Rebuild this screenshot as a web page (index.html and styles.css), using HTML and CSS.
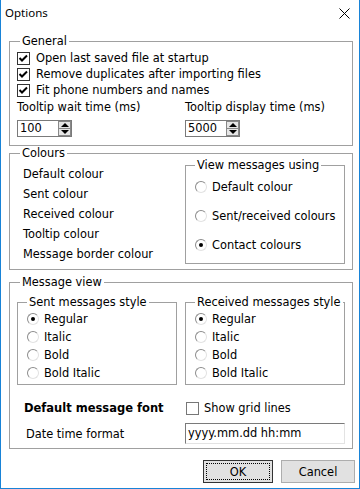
FILE: index.html
```html
<!DOCTYPE html>
<html lang="en">
<head>
    <meta charset="UTF-8">
    <meta name="viewport" content="width=device-width, initial-scale=1.0">
    <title>Options</title>
    <link rel="stylesheet" href="styles.css">
</head>
<body>

    <div class="window">
        <div class="titlebar">
            <span class="title">Options</span>
            <svg class="close" width="11" height="11" viewBox="0 0 11 11">
                <path d="M0.5 0.5 L10.5 10.5 M10.5 0.5 L0.5 10.5" stroke="#000" stroke-width="1" fill="none"/>
            </svg>
        </div>

        <div class="content">
            <fieldset class="group general">
                <legend>General</legend>
                <div class="checkList">
                    <div class="checkRow">
                        <span class="checkbox checked"><svg width="11" height="11" viewBox="0 0 11 11"><path d="M1.5 5 L4 7.5 L9 2.5" stroke="#000" stroke-width="2" fill="none"/></svg></span>
                        Open last saved file at startup
                    </div>
                    <div class="checkRow">
                        <span class="checkbox checked"><svg width="11" height="11" viewBox="0 0 11 11"><path d="M1.5 5 L4 7.5 L9 2.5" stroke="#000" stroke-width="2" fill="none"/></svg></span>
                        Remove duplicates after importing files
                    </div>
                    <div class="checkRow">
                        <span class="checkbox checked"><svg width="11" height="11" viewBox="0 0 11 11"><path d="M1.5 5 L4 7.5 L9 2.5" stroke="#000" stroke-width="2" fill="none"/></svg></span>
                        Fit phone numbers and names
                    </div>
                </div>

                <div class="twoCol tooltipRow">
                    <div>
                        <div class="fieldLabel">Tooltip wait time (ms)</div>
                        <div class="spin">
                            <span class="spinValue">100</span>
                            <span class="spinButtons">
                                <span class="spinUp"></span>
                                <span class="spinDown"></span>
                            </span>
                        </div>
                    </div>
                    <div>
                        <div class="fieldLabel">Tooltip display time (ms)</div>
                        <div class="spin">
                            <span class="spinValue">5000</span>
                            <span class="spinButtons">
                                <span class="spinUp"></span>
                                <span class="spinDown"></span>
                            </span>
                        </div>
                    </div>
                </div>
            </fieldset>

            <fieldset class="group colours">
                <legend>Colours</legend>
                <div class="twoCol">
                    <div class="colourList">
                        <div class="colourRow">Default colour</div>
                        <div class="colourRow">Sent colour</div>
                        <div class="colourRow">Received colour</div>
                        <div class="colourRow">Tooltip colour</div>
                        <div class="colourRow">Message border colour</div>
                    </div>
                    <fieldset class="group inner viewUsing">
                        <legend>View messages using</legend>
                        <div class="radioRow tall"><span class="radio"></span>Default colour</div>
                        <div class="radioRow tall"><span class="radio"></span>Sent/received colours</div>
                        <div class="radioRow tall"><span class="radio selected"></span>Contact colours</div>
                    </fieldset>
                </div>
            </fieldset>

            <fieldset class="group messageView">
                <legend>Message view</legend>
                <div class="twoCol">
                    <fieldset class="group inner styleBox">
                        <legend>Sent messages style</legend>
                        <div class="radioRow"><span class="radio selected"></span>Regular</div>
                        <div class="radioRow"><span class="radio"></span>Italic</div>
                        <div class="radioRow"><span class="radio"></span>Bold</div>
                        <div class="radioRow"><span class="radio"></span>Bold Italic</div>
                    </fieldset>
                    <fieldset class="group inner styleBox">
                        <legend>Received messages style</legend>
                        <div class="radioRow"><span class="radio selected"></span>Regular</div>
                        <div class="radioRow"><span class="radio"></span>Italic</div>
                        <div class="radioRow"><span class="radio"></span>Bold</div>
                        <div class="radioRow"><span class="radio"></span>Bold Italic</div>
                    </fieldset>
                </div>

                <div class="twoCol fontRow">
                    <div class="fontLabel">Default message font</div>
                    <div class="gridCheck"><span class="checkbox"></span>Show grid lines</div>
                </div>

                <div class="twoCol dateRow">
                    <div class="dateLabel">Date time format</div>
                    <div class="textBox">yyyy.mm.dd hh:mm</div>
                </div>
            </fieldset>
        </div>

        <div class="buttons">
            <div class="btn btnOk"><span class="focusRect">OK</span></div>
            <div class="btn btnCancel">Cancel</div>
        </div>
    </div>

</body>
</html>
```

FILE: styles.css
```css
body {
    margin: 0;
    font-family: "DejaVu Sans", sans-serif;
    font-size: 11.4px;
    color: #000;
    background-color: #fff;
}

.window {
    box-sizing: border-box;
    width: 360px;
    height: 489px;
    background-color: #fff;
    border-left: 1px solid #1883d7;
    border-right: 1px solid #1883d7;
    border-bottom: 1px solid #1883d7;
}

.titlebar {
    height: 30px;
    display: flex;
    justify-content: space-between;
    align-items: flex-start;
}

.title {
    font-family: "Noto Sans", sans-serif;
    font-size: 11.5px;
    line-height: 26px;
    padding-left: 4px;
}

.close {
    margin-top: 8px;
    margin-right: 9px;
}

.content {
    padding: 0 6px 0 8px;
}

.group {
    margin: 0;
    padding: 0 7px 8px 7px;
    border: 1px solid #a0a0a0;
    min-width: 0;
}

.group legend {
    padding: 0 2px;
    margin-left: 3px;
    line-height: 13px;
}

.general {
    margin-top: 5px;
}

.checkList {
    padding-top: 2px;
}

.checkRow {
    display: flex;
    align-items: center;
    height: 16px;
    white-space: nowrap;
}

.checkbox {
    box-sizing: border-box;
    width: 13px;
    height: 13px;
    border: 1px solid #333;
    background-color: #fff;
    display: flex;
    align-items: center;
    justify-content: center;
    margin-right: 6px;
    flex-shrink: 0;
}

.twoCol {
    display: grid;
    grid-template-columns: 160px 160px;
    column-gap: 8px;
}

.tooltipRow {
    margin-top: 2px;
}

.fieldLabel {
    line-height: 14px;
    height: 14px;
    white-space: nowrap;
}

.spin {
    box-sizing: border-box;
    margin-top: 6px;
    width: 55px;
    height: 17px;
    border: 1px solid #7a7a7a;
    display: flex;
    justify-content: space-between;
}

.spinValue {
    padding-left: 2px;
    line-height: 15px;
}

.spinButtons {
    box-sizing: border-box;
    width: 15px;
    display: flex;
    flex-direction: column;
    border-left: 2px solid #fff;
}

.spinUp,
.spinDown {
    flex: 1;
    background-color: #e6e6e6;
    border: 1px solid #888;
    display: flex;
    align-items: center;
    justify-content: center;
}

.spinDown {
    border-top: none;
}

.spinUp::after {
    content: "";
    border-left: 4px solid transparent;
    border-right: 4px solid transparent;
    border-bottom: 4px solid #000;
}

.spinDown::after {
    content: "";
    border-left: 4px solid transparent;
    border-right: 4px solid transparent;
    border-top: 4px solid #000;
}

.colours {
    margin-top: 1px;
    padding-bottom: 5px;
}

.colourList {
    padding-top: 4px;
    padding-left: 6px;
}

.colourRow {
    height: 20px;
    line-height: 20px;
    white-space: nowrap;
}

.inner {
    padding: 0 7px 2px 8px;
}

.inner legend {
    margin-left: 1px;
    white-space: nowrap;
}

.viewUsing {
    margin-top: -1px;
}

.radioRow {
    display: flex;
    align-items: center;
    height: 18px;
    white-space: nowrap;
}

.radioRow.tall {
    height: 29px;
}

.radio {
    box-sizing: border-box;
    width: 12px;
    height: 12px;
    border-radius: 50%;
    border: 1px solid;
    border-color: #8c8c8c #e2e2e2 #e2e2e2 #8c8c8c;
    background-color: #fff;
    margin-left: 1px;
    margin-right: 5px;
    display: flex;
    align-items: center;
    justify-content: center;
    flex-shrink: 0;
}

.radio.selected::after {
    content: "";
    width: 4px;
    height: 4px;
    border-radius: 50%;
    background-color: #000;
}

.messageView {
    margin-top: 6px;
    padding-bottom: 4px;
}

.styleBox {
    margin-top: 7px;
    padding-top: 1px;
}

.fontRow {
    margin-top: 15px;
    height: 16px;
    align-items: center;
}

.fontLabel {
    font-weight: bold;
    font-size: 11.5px;
    padding-left: 7px;
    white-space: nowrap;
}

.gridCheck {
    display: flex;
    align-items: center;
    padding-left: 1px;
}

.gridCheck .checkbox {
    border-color: #777;
    margin-right: 5px;
}

.dateRow {
    margin-top: 7px;
    height: 21px;
    align-items: center;
}

.dateLabel {
    padding-left: 9px;
}

.textBox {
    box-sizing: border-box;
    width: 160px;
    height: 21px;
    border: 1px solid;
    border-color: #7a7a7a #e3e3e3 #e3e3e3 #7a7a7a;
    padding-left: 2px;
    line-height: 19px;
}

.buttons {
    display: flex;
    justify-content: flex-end;
    gap: 8px;
    margin-top: 11px;
    margin-right: 4px;
}

.btn {
    box-sizing: border-box;
    height: 23px;
    background-color: #e1e1e1;
    border: 1px solid #adadad;
    display: flex;
    align-items: center;
    justify-content: center;
}

.btnOk {
    width: 70px;
    border-color: #333;
    padding: 2px;
}

.focusRect {
    box-sizing: border-box;
    width: 100%;
    height: 100%;
    border: 1px dotted #000;
    display: flex;
    align-items: center;
    justify-content: center;
}

.btnCancel {
    width: 74px;
}
```
